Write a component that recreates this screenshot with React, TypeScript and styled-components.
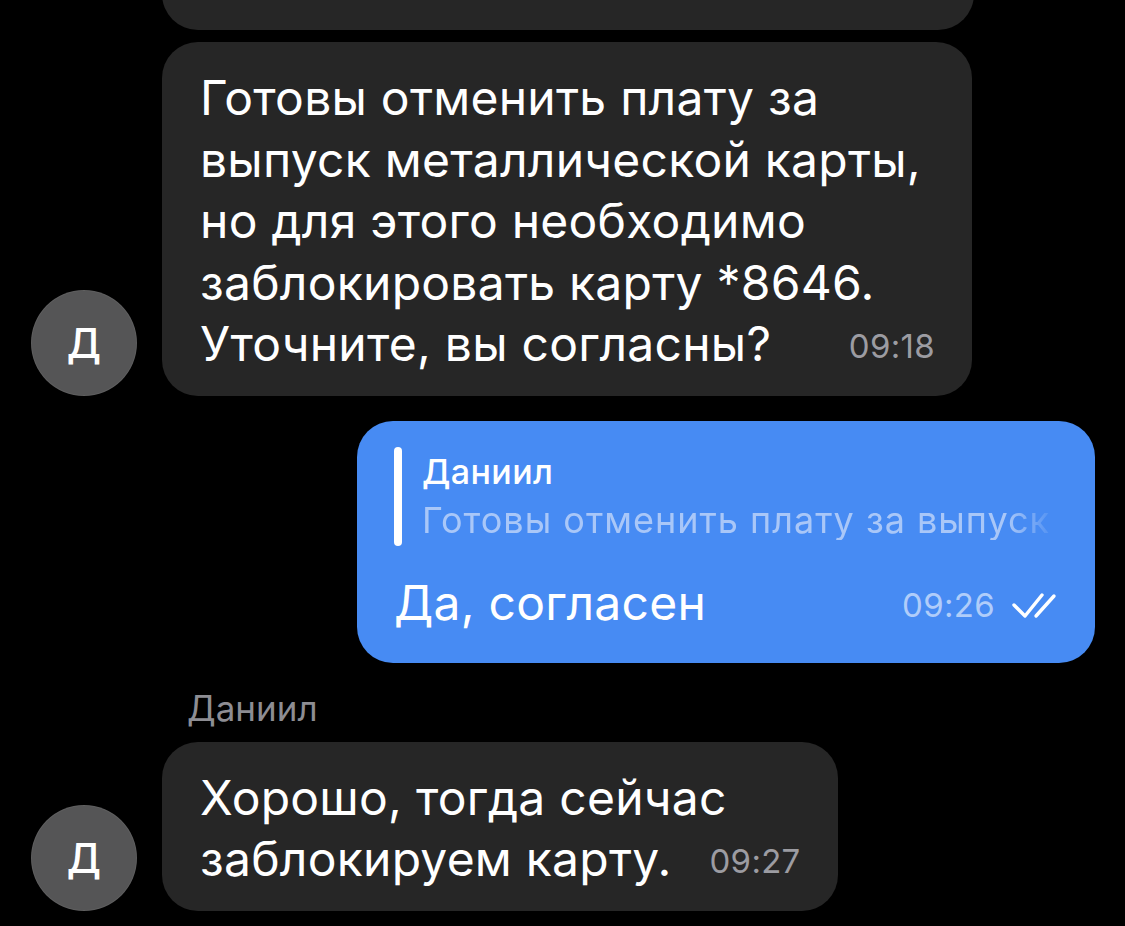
import React from 'react';
import styled, { createGlobalStyle } from 'styled-components';

const GlobalStyle = createGlobalStyle`
  html, body {
    margin: 0;
    padding: 0;
    background: #000;
  }
  body {
    font-family: Inter, Roboto, "Noto Sans", "Liberation Sans", sans-serif;
    -webkit-font-smoothing: antialiased;
  }
`;

const Chat = styled.div`
  width: 1125px;
  height: 926px;
  overflow: hidden;
  background: #000;
  display: flex;
  flex-direction: column;
`;

const IncomingRow = styled.div<{ $gap: number }>`
  display: flex;
  align-items: flex-end;
  gap: 25px;
  padding-left: 31px;
  margin-top: ${(p) => p.$gap}px;
`;

const AvatarSlot = styled.div`
  width: 106px;
  flex-shrink: 0;
`;

const Avatar = styled.div`
  width: 106px;
  height: 106px;
  border-radius: 50%;
  background: #555556;
  box-shadow: inset 0 0 0 1px rgba(255, 255, 255, 0.06);
  color: #fff;
  font-size: 41px;
  font-weight: 500;
  display: flex;
  align-items: center;
  justify-content: center;
  flex-shrink: 0;
`;

const Bubble = styled.div<{ $width?: number }>`
  background: #262626;
  border-radius: 36px;
  padding: 25px 37px 21px 38px;
  width: ${(p) => (p.$width ? `${p.$width}px` : 'auto')};
  box-sizing: border-box;
  color: #fff;
  font-size: 48px;
  line-height: 61.5px;
  letter-spacing: 0.25px;
`;

const CutBubble = styled(Bubble)`
  height: 90px;
  margin-top: -60px;
  padding: 0;
`;

const LastLine = styled.div<{ $spread?: boolean }>`
  display: flex;
  align-items: baseline;
  justify-content: ${(p) => (p.$spread ? 'space-between' : 'flex-start')};
  gap: 38px;
  height: 61.5px;
`;

const Time = styled.span<{ $tone: 'gray' | 'blue' }>`
  font-size: 33px;
  line-height: 1;
  letter-spacing: 0.3px;
  color: ${(p) => (p.$tone === 'gray' ? '#9c9ca2' : '#b0cdfa')};
  white-space: nowrap;
  display: inline-flex;
  align-items: baseline;
  gap: 16px;
  transform: translateY(-3px);

  svg {
    align-self: center;
  }
`;

const OutgoingRow = styled.div`
  display: flex;
  justify-content: flex-end;
  padding-right: 30px;
  margin-top: 25px;
`;

const BlueBubble = styled.div`
  background: #478bf3;
  border-radius: 36px;
  width: 738px;
  box-sizing: border-box;
  padding: 26px 38px 30px 37px;
  color: #fff;
`;

const Quote = styled.div`
  display: flex;
  gap: 20px;
  margin-bottom: 27px;
`;

const QuoteBar = styled.div`
  width: 8px;
  border-radius: 4px;
  background: #fff;
  flex-shrink: 0;
`;

const QuoteBody = styled.div`
  min-width: 0;
  flex: 1;
  padding: 5px 0 6px 0;
`;

const QuoteName = styled.div`
  font-size: 34px;
  font-weight: 500;
  line-height: 40px;
  letter-spacing: 0.4px;
  color: #fff;
`;

const QuoteText = styled.div`
  margin-top: 8px;
  font-size: 36px;
  line-height: 40px;
  letter-spacing: 1px;
  color: #a9c7f8;
  white-space: nowrap;
  overflow: hidden;
  -webkit-mask-image: linear-gradient(to right, #000 calc(100% - 50px), transparent 100%);
  mask-image: linear-gradient(to right, #000 calc(100% - 50px), transparent 100%);
`;

const BlueMain = styled.div`
  display: flex;
  align-items: baseline;
  justify-content: space-between;
  font-size: 48px;
  line-height: 60px;
  letter-spacing: 0.25px;
`;

const SenderName = styled.div`
  margin: 23px 0 0 187px;
  font-size: 35px;
  line-height: 44px;
  color: #8d8d93;
`;

const DoubleCheck = () => (
  <svg width="46" height="28" viewBox="0 0 46 28" fill="none">
    <path d="M3 14 L14 25 L31 4" stroke="#fff" strokeWidth="3.4" strokeLinecap="round" strokeLinejoin="round" />
    <path d="M25 25 L43 5" stroke="#fff" strokeWidth="3.4" strokeLinecap="round" />
  </svg>
);

const App: React.FC = () => {
  return (
    <>
      <GlobalStyle />
      <Chat>
        <IncomingRow $gap={0}>
          <AvatarSlot />
          <CutBubble $width={812} />
        </IncomingRow>

        <IncomingRow $gap={12}>
          <Avatar>Д</Avatar>
          <Bubble $width={810}>
            Готовы отменить плату за
            <br />
            выпуск металлической карты,
            <br />
            но для этого необходимо
            <br />
            заблокировать карту *8646.
            <LastLine $spread>
              <span>Уточните, вы согласны?</span>
              <Time $tone="gray">09:18</Time>
            </LastLine>
          </Bubble>
        </IncomingRow>

        <OutgoingRow>
          <BlueBubble>
            <Quote>
              <QuoteBar />
              <QuoteBody>
                <QuoteName>Даниил</QuoteName>
                <QuoteText>Готовы отменить плату за выпуск металлической карты</QuoteText>
              </QuoteBody>
            </Quote>
            <BlueMain>
              <span>Да, согласен</span>
              <Time $tone="blue">
                09:26
                <DoubleCheck />
              </Time>
            </BlueMain>
          </BlueBubble>
        </OutgoingRow>

        <SenderName>Даниил</SenderName>

        <IncomingRow $gap={12}>
          <Avatar>Д</Avatar>
          <Bubble>
            Хорошо, тогда сейчас
            <LastLine>
              <span>заблокируем карту.</span>
              <Time $tone="gray">09:27</Time>
            </LastLine>
          </Bubble>
        </IncomingRow>
      </Chat>
    </>
  );
};

export default App;
